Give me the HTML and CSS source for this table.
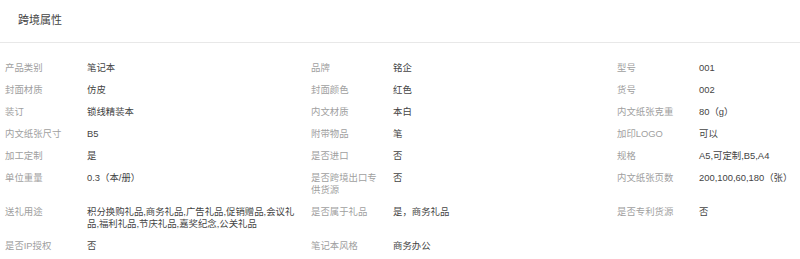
FILE: index.html
```html
<!DOCTYPE html>
<html lang="zh-CN">
  <head>
    <meta charset="UTF-8" />
    <meta name="viewport" content="width=device-width, initial-scale=1.0" />
    <title>跨境属性</title>
    <link rel="stylesheet" href="styles.css">
  </head>
  <body>
    <div class="panel">
      <div class="panel-title">跨境属性</div>

      <div class="attr-grid">
        <div class="attr-label">产品类别</div>
        <div class="attr-value">笔记本</div>
        <div class="attr-label">品牌</div>
        <div class="attr-value">铭企</div>
        <div class="attr-label">型号</div>
        <div class="attr-value">001</div>

        <div class="attr-label">封面材质</div>
        <div class="attr-value">仿皮</div>
        <div class="attr-label">封面颜色</div>
        <div class="attr-value">红色</div>
        <div class="attr-label">货号</div>
        <div class="attr-value">002</div>

        <div class="attr-label">装订</div>
        <div class="attr-value">锁线精装本</div>
        <div class="attr-label">内文材质</div>
        <div class="attr-value">本白</div>
        <div class="attr-label">内文纸张克重</div>
        <div class="attr-value">80（g）</div>

        <div class="attr-label">内文纸张尺寸</div>
        <div class="attr-value">B5</div>
        <div class="attr-label">附带物品</div>
        <div class="attr-value">笔</div>
        <div class="attr-label">加印LOGO</div>
        <div class="attr-value">可以</div>

        <div class="attr-label">加工定制</div>
        <div class="attr-value">是</div>
        <div class="attr-label">是否进口</div>
        <div class="attr-value">否</div>
        <div class="attr-label">规格</div>
        <div class="attr-value">A5,可定制,B5,A4</div>

        <div class="attr-label">单位重量</div>
        <div class="attr-value">0.3（本/册）</div>
        <div class="attr-label">是否跨境出口专供货源</div>
        <div class="attr-value">否</div>
        <div class="attr-label">内文纸张页数</div>
        <div class="attr-value">200,100,60,180（张）</div>

        <div class="attr-label">送礼用途</div>
        <div class="attr-value">积分换购礼品,商务礼品,广告礼品,促销赠品,会议礼品,福利礼品,节庆礼品,嘉奖纪念,公关礼品</div>
        <div class="attr-label">是否属于礼品</div>
        <div class="attr-value">是，商务礼品</div>
        <div class="attr-label">是否专利货源</div>
        <div class="attr-value">否</div>

        <div class="attr-label">是否IP授权</div>
        <div class="attr-value">否</div>
        <div class="attr-label">笔记本风格</div>
        <div class="attr-value">商务办公</div>
        <div class="attr-label"></div>
        <div class="attr-value"></div>
      </div>
    </div>
  </body>
</html>
```

FILE: styles.css
```css
body {
  margin: 0;
  background: #fff;
  font-family: "Liberation Sans", "Noto Sans CJK SC", sans-serif;
  color: #333;
}
.panel {
  background: #fff;
  overflow: hidden;
}
.panel-title {
  height: 43px;
  box-sizing: border-box;
  padding: 14px 0 0 18px;
  font-size: 11px;
  line-height: 13px;
  color: #444;
  border-bottom: 1px solid #e8e8e8;
}
.attr-grid {
  display: grid;
  grid-template-columns: 82px 224px 82px 224px 82px 1fr;
  padding: 14px 0 0 5px;
  font-size: 9.4px;
  line-height: 12px;
}
.attr-label {
  padding: 5px 10px 5px 0;
  color: #a0a0a0;
}
.attr-value {
  padding: 5px 15px 5px 0;
  color: #444;
}
/* last column runs to the edge of the panel */
.attr-value:nth-child(6n) {
  padding-right: 0;
  white-space: nowrap;
}
```
